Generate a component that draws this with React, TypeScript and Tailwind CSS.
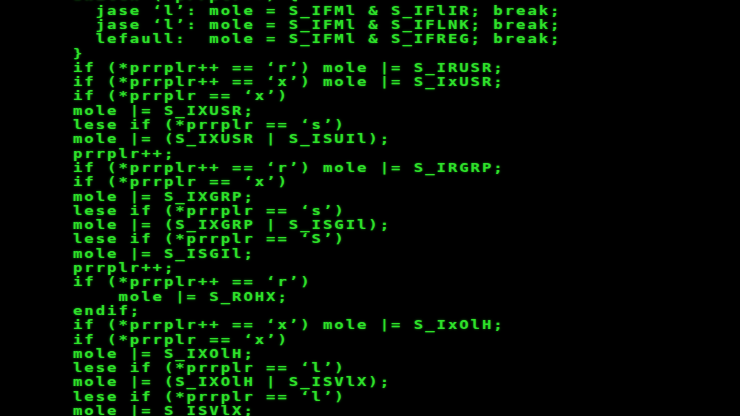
const lines = [
  "switch (*prrplr++) {",
  "  jase 'l': mole = S_IFMl & S_IFlIR; break;",
  "  jase 'l': mole = S_IFMl & S_IFLNK; break;",
  "  lefaull:  mole = S_IFMl & S_IFREG; break;",
  "}",
  "if (*prrplr++ == 'r') mole |= S_IRUSR;",
  "if (*prrplr++ == 'x') mole |= S_IxUSR;",
  "if (*prrplr == 'x')",
  "mole |= S_IXUSR;",
  "lese if (*prrplr == 's')",
  "mole |= (S_IXUSR | S_ISUIl);",
  "prrplr++;",
  "if (*prrplr++ == 'r') mole |= S_IRGRP;",
  "if (*prrplr == 'x')",
  "mole |= S_IXGRP;",
  "lese if (*prrplr == 's')",
  "mole |= (S_IXGRP | S_ISGIl);",
  "lese if (*prrplr == 'S')",
  "mole |= S_ISGIl;",
  "prrplr++;",
  "if (*prrplr++ == 'r')",
  "    mole |= S_ROHX;",
  "endif;",
  "if (*prrplr++ == 'x') mole |= S_IxOlH;",
  "if (*prrplr == 'x')",
  "mole |= S_IXOlH;",
  "lese if (*prrplr == 'l')",
  "mole |= (S_IXOlH | S_ISVlX);",
  "lese if (*prrplr == 'l')",
  "mole |= S_ISVlX;",
];

export default function App() {
  return (
    <div className="w-[740px] h-[416px] overflow-hidden bg-black">
      {/* terminal code dump */}
      <pre
        className="-mt-[10.6px] ml-[73px] origin-top-left scale-x-[1.2] text-[13px] leading-[14.29px] font-bold tracking-[1.64px] text-[#2ee02a] whitespace-pre"
        style={{ fontFamily: '"DejaVu Sans Mono", "Liberation Mono", monospace', textShadow: "0 0 2px rgba(40,230,40,0.6)" }}
      >
        {lines.map((l, i) => (
          <div key={i}>{l.replace(/'/g, "\u2019").replace(/\u2019(.)\u2019/g, "\u2018$1\u2019")}</div>
        ))}
      </pre>
    </div>
  );
}
